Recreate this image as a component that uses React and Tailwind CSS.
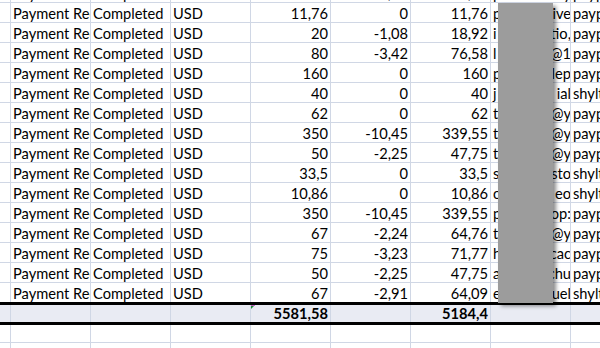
import React from "react";

const rows = [
    ["11,76", "0", "11,76", "p", "ive", "payp"],
    ["20", "-1,08", "18,92", "i", "tio,", "payp"],
    ["80", "-3,42", "76,58", "l", "@1", "payp"],
    ["160", "0", "160", "p", "lep", "payp"],
    ["40", "0", "40", "j", "ial", "shylt"],
    ["62", "0", "62", "t", "@y", "payp"],
    ["350", "-10,45", "339,55", "t", "@y", "payp"],
    ["50", "-2,25", "47,75", "t", "@y", "payp"],
    ["33,5", "0", "33,5", "s", "sto", "shylt"],
    ["10,86", "0", "10,86", "o", "eo", "shylt"],
    ["350", "-10,45", "339,55", "p", "op:", "payp"],
    ["67", "-2,24", "64,76", "t", "@y", "payp"],
    ["75", "-3,23", "71,77", "h", "cac", "payp"],
    ["50", "-2,25", "47,75", "a", "chu", "payp"],
    ["67", "-2,91", "64,09", "e", "uel", "shylt"],
];

const Cell = ({ children, right, first }) => (
    <div className={first
        ? "w-[11px] shrink-0 h-full border-r border-[#d0d7e5]"
        : right
            ? "w-[80px] shrink-0 h-full border-r border-[#d0d7e5] overflow-hidden whitespace-nowrap flex items-end justify-end pr-[2px]"
            : "w-[80px] shrink-0 h-full border-r border-[#d0d7e5] overflow-hidden whitespace-nowrap flex items-end pl-[2px]"}>
        {children}
    </div>
);

const DataRow = ({ row, top }) => {
    const [gross, fee, net, a, b, c] = row;
    return (
        <div className={top
            ? "flex h-[20px] -mt-[17px] border-b border-[#d0d7e5]"
            : "flex h-[20px] border-b border-[#d0d7e5]"}>
            <Cell first />
            <Cell>Payment Received</Cell>
            <Cell>Completed</Cell>
            <Cell>USD</Cell>
            <Cell right>{gross}</Cell>
            <Cell right>{fee}</Cell>
            <Cell right>{net}</Cell>
            <div className="w-[80px] shrink-0 h-full border-r border-[#d0d7e5] overflow-hidden whitespace-nowrap flex items-end pl-[2px]">
                <span>{a}</span>
                <span className="ml-auto -mr-[1px]">{b}</span>
            </div>
            <Cell>{c}</Cell>
        </div>
    );
};

export default function App() {
    return (
        <div className="relative w-[600px] h-[348px] overflow-hidden bg-white text-black text-[14.67px] leading-[17px]"
            style={{ fontFamily: "Lato, 'Liberation Sans', sans-serif" }}>
            <div className="w-[700px]">
                <DataRow row={["25", "-1,03", "23,97", "p", "y", "payp"]} top />
                {rows.map((r, i) => <DataRow key={i} row={r} />)}

                {/* total row */}
                <div className="flex h-[23px] -mt-px border-y-[3px] border-black bg-[#e9ebf3] font-bold">
                    <Cell first />
                    <Cell />
                    <Cell />
                    <Cell />
                    <div className="relative w-[80px] shrink-0 h-full border-r border-[#d0d7e5] flex items-end justify-end pr-[2px]">
                        <svg className="absolute left-0 top-0" width="5" height="5" viewBox="0 0 5 5">
                            <polygon points="0,0 4,0 0,4" fill="#1e8a3a" />
                            <line x1="0" y1="0.5" x2="4" y2="0.5" stroke="#c060c0" strokeWidth="1" />
                        </svg>
                        5581,58
                    </div>
                    <Cell />
                    <Cell right>5184,4</Cell>
                    <Cell />
                    <Cell />
                </div>

                <div className="flex h-[18px] border-b border-[#d0d7e5]">
                    <Cell first /><Cell /><Cell /><Cell /><Cell /><Cell /><Cell /><Cell /><Cell />
                </div>
                <div className="flex h-[20px] border-b border-[#d0d7e5]">
                    <Cell first /><Cell /><Cell /><Cell /><Cell /><Cell /><Cell /><Cell /><Cell />
                </div>
            </div>

            {/* redaction block */}
            <div className="absolute left-[498px] top-[3px] w-[55px] h-[300px] bg-[#9c9c9c] shadow-[3px_3px_4px_rgba(0,0,0,0.45)]" />
        </div>
    );
}
